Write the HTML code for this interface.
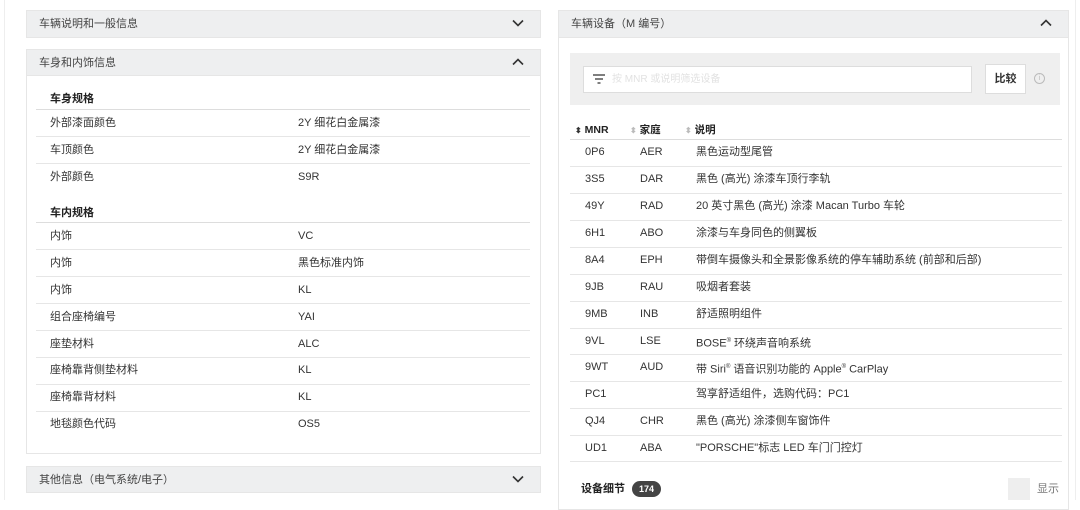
<!DOCTYPE html>
<html><head><meta charset="utf-8"><style>
*{margin:0;padding:0;box-sizing:border-box}
body{width:1080px;height:500px;background:#fff;position:relative;overflow:hidden;font-family:"Liberation Sans","Noto Sans CJK SC",sans-serif;color:#333;font-size:11px}
.a{position:absolute}
.hd{position:absolute;background:#eeeff0;border:1px solid #e6e6e6;color:#444;font-size:11px;line-height:26px;padding-left:12px}
.chev{position:absolute;right:16px;top:8px}
.t{position:absolute;white-space:nowrap;line-height:14px}
.ln{position:absolute;height:1px;background:#e6e6e6}
.b{font-weight:bold;color:#222}
</style></head><body>
<div class="a" style="left:4px;top:0;width:1px;height:500px;background:#eee"></div>
<div class="a" style="left:1075px;top:0;width:1px;height:500px;background:#eee"></div>

<!-- left -->
<div class="hd" style="left:26px;top:10px;width:515px;height:28px">车辆说明和一般信息<svg class="chev" width="12" height="8" viewBox="0 0 12 8"><path d="M1 1.5l5 5 5-5" fill="none" stroke="#333" stroke-width="1.6"/></svg></div>
<div class="a" style="left:26px;top:49px;width:515px;height:405px;border:1px solid #e6e6e6"></div>
<div class="hd" style="left:26px;top:49px;width:515px;height:27px">车身和内饰信息<svg class="chev" width="12" height="8" viewBox="0 0 12 8"><path d="M1 6.5l5-5 5 5" fill="none" stroke="#333" stroke-width="1.6"/></svg></div>

<div class="t b" style="left:50px;top:92px">车身规格</div>
<div class="ln" style="left:36px;top:109px;width:494px;background:#ddd"></div>
<div class="t" style="left:50px;top:116px">外部漆面颜色</div><div class="t" style="left:298px;top:116px">2Y 细花白金属漆</div>
<div class="ln" style="left:36px;top:136px;width:494px"></div>
<div class="t" style="left:50px;top:143px">车顶颜色</div><div class="t" style="left:298px;top:143px">2Y 细花白金属漆</div>
<div class="ln" style="left:36px;top:163px;width:494px"></div>
<div class="t" style="left:50px;top:170px">外部颜色</div><div class="t" style="left:298px;top:170px">S9R</div>

<div class="t b" style="left:50px;top:206px">车内规格</div>
<div class="ln" style="left:36px;top:222px;width:494px;background:#ddd"></div>
<div class="t" style="left:50px;top:229px">内饰</div><div class="t" style="left:298px;top:229px">VC</div>
<div class="ln" style="left:36px;top:249px;width:494px"></div>
<div class="t" style="left:50px;top:256px">内饰</div><div class="t" style="left:298px;top:256px">黑色标准内饰</div>
<div class="ln" style="left:36px;top:276px;width:494px"></div>
<div class="t" style="left:50px;top:283px">内饰</div><div class="t" style="left:298px;top:283px">KL</div>
<div class="ln" style="left:36px;top:303px;width:494px"></div>
<div class="t" style="left:50px;top:310px">组合座椅编号</div><div class="t" style="left:298px;top:310px">YAI</div>
<div class="ln" style="left:36px;top:330px;width:494px"></div>
<div class="t" style="left:50px;top:337px">座垫材料</div><div class="t" style="left:298px;top:337px">ALC</div>
<div class="ln" style="left:36px;top:357px;width:494px"></div>
<div class="t" style="left:50px;top:363px">座椅靠背侧垫材料</div><div class="t" style="left:298px;top:363px">KL</div>
<div class="ln" style="left:36px;top:384px;width:494px"></div>
<div class="t" style="left:50px;top:390px">座椅靠背材料</div><div class="t" style="left:298px;top:390px">KL</div>
<div class="ln" style="left:36px;top:411px;width:494px"></div>
<div class="t" style="left:50px;top:417px">地毯颜色代码</div><div class="t" style="left:298px;top:417px">OS5</div>

<div class="hd" style="left:26px;top:466px;width:515px;height:27px">其他信息（电气系统/电子）<svg class="chev" width="12" height="8" viewBox="0 0 12 8"><path d="M1 1.5l5 5 5-5" fill="none" stroke="#333" stroke-width="1.6"/></svg></div>

<!-- right -->
<div class="a" style="left:558px;top:10px;width:511px;height:500px;border:1px solid #e6e6e6"></div>
<div class="hd" style="left:558px;top:10px;width:511px;height:28px">车辆设备（M 编号）<svg class="chev" width="12" height="8" viewBox="0 0 12 8"><path d="M1 6.5l5-5 5 5" fill="none" stroke="#333" stroke-width="1.6"/></svg></div>
<div class="a" style="left:570px;top:53px;width:490px;height:52px;background:#efefef"></div>
<div class="a" style="left:583px;top:66px;width:389px;height:27px;background:#fff;border:1px solid #ddd"></div>
<svg class="a" style="left:592px;top:74px" width="14" height="10" viewBox="0 0 14 10"><path d="M1 1h12M3 5h8M5.5 9h3" stroke="#555" stroke-width="1.4"/></svg>
<div class="t" style="left:612px;top:73px;color:#e2e2e2;font-size:10px">按 MNR 或说明筛选设备</div>
<div class="a" style="left:985px;top:64px;width:41px;height:30px;background:#fff;border:1px solid #ddd;font-weight:bold;font-size:11px;line-height:28px;text-align:center;color:#333">比较</div>
<div class="a" style="left:1034px;top:73px;width:11px;height:11px;border:1px solid #bbb;border-radius:50%;font-size:7px;line-height:9px;text-align:center;color:#bbb">i</div>

<div class="t b" style="left:575px;top:123px;font-size:10.5px"><span style="color:#333;font-size:8px">⬍</span> MNR</div>
<div class="t b" style="left:630px;top:123px;font-size:10.5px"><span style="color:#bbb;font-size:8px">⬍</span> 家庭</div>
<div class="t b" style="left:685px;top:123px;font-size:10.5px"><span style="color:#bbb;font-size:8px">⬍</span> 说明</div>
<div class="ln" style="left:570px;top:139px;width:492px;background:#ddd"></div>

<div class="t" style="left:585px;top:145px">0P6</div><div class="t" style="left:640px;top:145px">AER</div><div class="t" style="left:696px;top:145px">黑色运动型尾管</div>
<div class="ln" style="left:570px;top:166px;width:492px"></div>
<div class="t" style="left:585px;top:172px">3S5</div><div class="t" style="left:640px;top:172px">DAR</div><div class="t" style="left:696px;top:172px">黑色 (高光) 涂漆车顶行李轨</div>
<div class="ln" style="left:570px;top:193px;width:492px"></div>
<div class="t" style="left:585px;top:199px">49Y</div><div class="t" style="left:640px;top:199px">RAD</div><div class="t" style="left:696px;top:199px">20 英寸黑色 (高光) 涂漆 Macan Turbo 车轮</div>
<div class="ln" style="left:570px;top:220px;width:492px"></div>
<div class="t" style="left:585px;top:226px">6H1</div><div class="t" style="left:640px;top:226px">ABO</div><div class="t" style="left:696px;top:226px">涂漆与车身同色的侧翼板</div>
<div class="ln" style="left:570px;top:247px;width:492px"></div>
<div class="t" style="left:585px;top:253px">8A4</div><div class="t" style="left:640px;top:253px">EPH</div><div class="t" style="left:696px;top:253px">带倒车摄像头和全景影像系统的停车辅助系统 (前部和后部)</div>
<div class="ln" style="left:570px;top:274px;width:492px"></div>
<div class="t" style="left:585px;top:280px">9JB</div><div class="t" style="left:640px;top:280px">RAU</div><div class="t" style="left:696px;top:280px">吸烟者套装</div>
<div class="ln" style="left:570px;top:301px;width:492px"></div>
<div class="t" style="left:585px;top:307px">9MB</div><div class="t" style="left:640px;top:307px">INB</div><div class="t" style="left:696px;top:307px">舒适照明组件</div>
<div class="ln" style="left:570px;top:328px;width:492px"></div>
<div class="t" style="left:585px;top:334px">9VL</div><div class="t" style="left:640px;top:334px">LSE</div><div class="t" style="left:696px;top:334px">BOSE<sup style="font-size:6px">®</sup> 环绕声音响系统</div>
<div class="ln" style="left:570px;top:354px;width:492px"></div>
<div class="t" style="left:585px;top:360px">9WT</div><div class="t" style="left:640px;top:360px">AUD</div><div class="t" style="left:696px;top:360px">带 Siri<sup style="font-size:6px">®</sup> 语音识别功能的 Apple<sup style="font-size:6px">®</sup> CarPlay</div>
<div class="ln" style="left:570px;top:381px;width:492px"></div>
<div class="t" style="left:585px;top:387px">PC1</div><div class="t" style="left:696px;top:387px">驾享舒适组件，选购代码：PC1</div>
<div class="ln" style="left:570px;top:408px;width:492px"></div>
<div class="t" style="left:585px;top:414px">QJ4</div><div class="t" style="left:640px;top:414px">CHR</div><div class="t" style="left:696px;top:414px">黑色 (高光) 涂漆侧车窗饰件</div>
<div class="ln" style="left:570px;top:435px;width:492px"></div>
<div class="t" style="left:585px;top:441px">UD1</div><div class="t" style="left:640px;top:441px">ABA</div><div class="t" style="left:696px;top:441px">"PORSCHE"标志 LED 车门门控灯</div>
<div class="ln" style="left:570px;top:461px;width:492px"></div>

<div class="t b" style="left:581px;top:482px">设备细节</div>
<div class="a" style="left:632px;top:481px;width:29px;height:16px;border-radius:8px;background:#444;color:#fff;font-size:9px;font-weight:bold;line-height:16px;text-align:center">174</div>
<div class="a" style="left:1008px;top:478px;width:22px;height:22px;background:#eee"></div>
<div class="t" style="left:1037px;top:482px;color:#777">显示</div>
</body></html>
